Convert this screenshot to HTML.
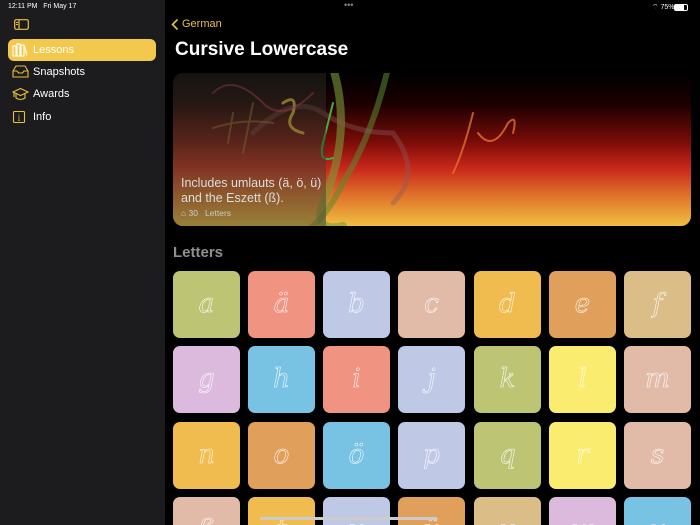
<!DOCTYPE html>
<html><head><meta charset="utf-8"><style>
*{margin:0;padding:0;box-sizing:border-box}
html,body{width:700px;height:525px;overflow:hidden}
body{background:#000;font-family:"Liberation Sans",sans-serif;position:relative;color:#fff}
#side{position:absolute;left:0;top:0;width:165px;height:525px;background:#1c1c1e}
.st{position:absolute;font-size:7px;color:#fff;top:3px}
.item{position:absolute;left:8px;width:148px;height:22px;border-radius:6px;font-size:11px;line-height:22px;padding-left:25px;color:#fff}
.item svg{position:absolute;left:4px;top:4px}
.tile{position:absolute;width:67px;height:67px;border-radius:7px;overflow:hidden}
.r4{height:28px;border-radius:7px 7px 0 0}
.tile span{position:absolute;left:0;right:0;top:18px;text-align:center;font-family:"DejaVu Serif",serif;font-style:italic;font-size:26px;font-weight:normal;color:transparent;-webkit-text-stroke:0.6px rgba(255,255,255,0.9)}
</style></head><body>
<div id="side">
<div class="st" style="left:8px">12:11 PM&nbsp;&nbsp; Fri May 17</div>
<svg style="position:absolute;left:14px;top:19px" width="15" height="11"><rect x="0.7" y="0.7" width="13.6" height="9.6" rx="1.5" fill="none" stroke="#e6c13e" stroke-width="1.2"/><line x1="5" y1="1" x2="5" y2="10" stroke="#e6c13e" stroke-width="1.2"/><line x1="2" y1="3.5" x2="4" y2="3.5" stroke="#e6c13e"/><line x1="2" y1="5.5" x2="4" y2="5.5" stroke="#e6c13e"/></svg>
<div class="item" style="top:39px;background:#f2c94c">
<svg width="16" height="14"><g fill="none" stroke="#fff" stroke-width="1.1"><rect x="1" y="3" width="3" height="10"/><rect x="5" y="1" width="3" height="12"/><rect x="9" y="2" width="3" height="11"/><path d="M12.5 3 L15 12.5"/></g></svg>Lessons</div>
<div class="item" style="top:61px">
<svg width="17" height="13"><g fill="none" stroke="#e6c13e" stroke-width="1.1"><path d="M1 6 L4 1 H13 L16 6 V12 H1 Z"/><path d="M1 6 H5 L6.5 8 H10.5 L12 6 H16"/></g></svg>Snapshots</div>
<div class="item" style="top:83px">
<svg width="17" height="15"><g fill="none" stroke="#e6c13e" stroke-width="1.1"><path d="M1 5 L8.5 1.5 L16 5 L8.5 8.5 Z"/><path d="M4 7 V11 Q8.5 14 13 11 V7"/><path d="M2 5.5 V10"/></g></svg>Awards</div>
<div class="item" style="top:106px">
<svg width="15" height="15"><rect x="1.5" y="1.5" width="11" height="11" rx="1" fill="none" stroke="#e6c13e" stroke-width="1.1"/><text x="7" y="11" font-size="9" fill="#e6c13e" text-anchor="middle" font-family="Liberation Serif">i</text></svg>Info</div>
</div>
<div style="position:absolute;left:344px;top:0;font-size:9px;color:#888">•••</div>
<div class="st" style="left:652px;color:#fff">⌔ 75%</div>
<div style="position:absolute;left:674px;top:4px;width:14px;height:7px;border:1px solid #fff;border-radius:2px"><div style="width:9px;height:5px;background:#fff"></div></div>
<svg style="position:absolute;left:171px;top:18px" width="8" height="13"><path d="M6.5 1.5 L1.5 6.5 L6.5 11.5" fill="none" stroke="#e6c13e" stroke-width="1.6"/></svg>
<div style="position:absolute;left:182px;top:18px;font-size:11px;color:#e6c13e">German</div>
<div style="position:absolute;left:175px;top:39px;font-size:19px;font-weight:bold">Cursive Lowercase</div>
<div style="position:absolute;left:173px;top:73px;width:518px;height:153px;border-radius:10px;overflow:hidden;background:linear-gradient(#000 0%,#1a0000 20%,#7a0c08 45%,#c8261a 62%,#dd6a28 78%,#f0c040 100%)">
<svg width="518" height="153" style="position:absolute;left:0;top:0" fill="none" stroke-linecap="round">
<path d="M160 -5 Q180 60 150 130 Q140 160 170 153" stroke="#7a9a38" stroke-width="8" opacity=".6"/>
<path d="M215 -5 Q200 60 170 110 Q150 150 130 160" stroke="#5a8a30" stroke-width="6" opacity=".55"/>
<path d="M80 60 Q120 20 150 40 T220 60 Q250 100 220 130" stroke="#8a5a5a" stroke-width="5" opacity=".4"/>
<path d="M300 40 Q290 80 280 100 M305 60 Q320 80 335 50 Q345 40 340 60" stroke="#e07030" stroke-width="2" opacity=".8"/>
<path d="M110 30 Q125 20 120 40 Q110 55 130 60" stroke="#e0b030" stroke-width="3"/>
<path d="M160 30 L150 70 Q145 90 160 85" stroke="#40b040" stroke-width="2"/>
<path d="M60 40 L55 70 M80 30 L70 80 M40 55 Q70 45 100 50" stroke="#a08030" stroke-width="2" opacity=".6"/>
<path d="M40 20 Q60 0 90 30 Q110 50 140 20" stroke="#e04060" stroke-width="2" opacity=".5"/>
</svg>
<div style="position:absolute;left:0;top:0;width:153px;height:153px;background:linear-gradient(rgba(40,40,35,0.5),rgba(80,75,50,0.55))"></div>
<div style="position:absolute;left:8px;top:103px;font-size:12.5px;line-height:15px;color:#ddd">Includes umlauts (ä, ö, ü)<br>and the Eszett (ß).</div>
<div style="position:absolute;left:8px;top:135px;font-size:8.5px;color:#ccc">⌂ 30&nbsp;&nbsp; Letters</div>
</div>
<div style="position:absolute;left:173px;top:244px;font-size:15px;font-weight:bold;color:#8e8e93">Letters</div>
<div class="tile" style="left:173px;top:271px;background:#bdc575"><span>a</span></div>
<div class="tile" style="left:248px;top:271px;background:#f09380"><span>ä</span></div>
<div class="tile" style="left:323px;top:271px;background:#bfc9e6"><span>b</span></div>
<div class="tile" style="left:398px;top:271px;background:#e2bba8"><span>c</span></div>
<div class="tile" style="left:474px;top:271px;background:#f0bb4f"><span>d</span></div>
<div class="tile" style="left:549px;top:271px;background:#e09f5b"><span>e</span></div>
<div class="tile" style="left:624px;top:271px;background:#dbbd87"><span>f</span></div>
<div class="tile" style="left:173px;top:346px;background:#dcbadd"><span>g</span></div>
<div class="tile" style="left:248px;top:346px;background:#78c2e4"><span>h</span></div>
<div class="tile" style="left:323px;top:346px;background:#f09380"><span>i</span></div>
<div class="tile" style="left:398px;top:346px;background:#bfc9e6"><span>j</span></div>
<div class="tile" style="left:474px;top:346px;background:#bdc575"><span>k</span></div>
<div class="tile" style="left:549px;top:346px;background:#faec6e"><span>l</span></div>
<div class="tile" style="left:624px;top:346px;background:#e2bba8"><span>m</span></div>
<div class="tile" style="left:173px;top:422px;background:#f0bb4f"><span>n</span></div>
<div class="tile" style="left:248px;top:422px;background:#e09f5b"><span>o</span></div>
<div class="tile" style="left:323px;top:422px;background:#78c2e4"><span>ö</span></div>
<div class="tile" style="left:398px;top:422px;background:#bfc9e6"><span>p</span></div>
<div class="tile" style="left:474px;top:422px;background:#bdc575"><span>q</span></div>
<div class="tile" style="left:549px;top:422px;background:#faec6e"><span>r</span></div>
<div class="tile" style="left:624px;top:422px;background:#e2bba8"><span>s</span></div>
<div class="tile r4" style="left:173px;top:497px;background:#e2bba8"><span>ß</span></div>
<div class="tile r4" style="left:248px;top:497px;background:#f0bb4f"><span>t</span></div>
<div class="tile r4" style="left:323px;top:497px;background:#bfc9e6"><span>u</span></div>
<div class="tile r4" style="left:398px;top:497px;background:#e09f5b"><span>ü</span></div>
<div class="tile r4" style="left:474px;top:497px;background:#dbbd87"><span>v</span></div>
<div class="tile r4" style="left:549px;top:497px;background:#dcbadd"><span>w</span></div>
<div class="tile r4" style="left:624px;top:497px;background:#78c2e4"><span>x</span></div>
<div style="position:absolute;left:260px;top:517px;width:177px;height:3px;border-radius:2px;background:#ccc"></div>
</body></html>
